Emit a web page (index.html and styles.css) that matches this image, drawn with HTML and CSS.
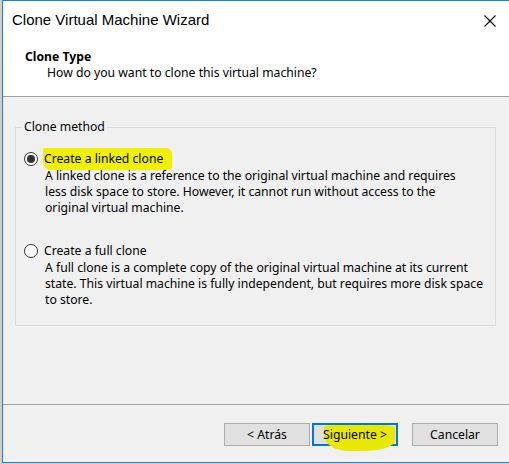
FILE: index.html
```html
<!DOCTYPE html>
<html>
<head>
<meta charset="utf-8">
<link rel="stylesheet" href="styles.css">
</head>
<body>
<div class="window">
  <div class="titlebar">
    <span class="title">Clone Virtual Machine Wizard</span>
    <svg class="close" width="12" height="12" viewBox="0 0 12 12"><path d="M0.5 0.5L11.5 11.5M11.5 0.5L0.5 11.5" stroke="#000" stroke-width="1.1" fill="none"/></svg>
  </div>
  <div class="header">
    <div class="h-title">Clone Type</div>
    <div class="h-sub">How do you want to clone this virtual machine?</div>
  </div>
  <div class="content">
    <fieldset class="group">
      <legend>Clone method</legend>
      <div class="option">
        <div class="opt-row"><span class="radio checked"></span><span class="opt-label hl">Create a linked clone</span></div>
        <div class="opt-desc">A linked clone is a reference to the original virtual machine and requires<br>less disk space to store. However, it cannot run without access to the<br>original virtual machine.</div>
      </div>
      <div class="option second">
        <div class="opt-row"><span class="radio"></span><span class="opt-label">Create a full clone</span></div>
        <div class="opt-desc">A full clone is a complete copy of the original virtual machine at its current<br>state. This virtual machine is fully independent, but requires more disk space<br>to store.</div>
      </div>
    </fieldset>
  </div>
  <div class="footer">
    <button class="btn">&lt; Atrás</button>
    <button class="btn primary"><span class="marker"></span><span class="btn-text">Siguiente &gt;</span></button>
    <button class="btn cancel">Cancelar</button>
  </div>
</div>
</body>
</html>
```
FILE: styles.css
```css
html, body {
  margin: 0;
  padding: 0;
}
body {
  width: 509px;
  height: 464px;
  overflow: hidden;
  background: #cfcfcf;
  font-family: "Noto Sans", "Liberation Sans", Arial, sans-serif;
  font-size: 12.2px;
  color: #000;
}
.window {
  margin-left: 2px;
  width: 506px;
  height: 461px;
  border: 1px solid #1883d7;
  border-right: none;
  background: #f0f0f0;
  display: flex;
  flex-direction: column;
}
.titlebar {
  height: 39px;
  flex: none;
  background: #fff;
  display: flex;
  align-items: center;
  padding: 0 13px 0 9px;
}
.title {
  font-family: "Liberation Sans", Arial, sans-serif;
  font-size: 15px;
  line-height: 20px;
  padding-bottom: 1px;
}
.close {
  margin-left: auto;
  display: block;
}
.header {
  flex: none;
  box-sizing: border-box;
  background: #fff;
  border-bottom: 1px solid #a0a0a0;
  height: 57px;
  padding: 9px 0 0 22px;
}
.h-title {
  font-weight: bold;
  line-height: 16px;
}
.h-sub {
  line-height: 16px;
  padding-left: 22px;
}
.content {
  height: 307px;
  flex: none;
  box-sizing: border-box;
  padding-top: 22px;
}
.group {
  margin: 0 13px 0 12px;
  padding: 15px 0 17px 8px;
  border: 1px solid #dcdcdc;
  min-width: 0;
}
.group legend {
  margin-left: -2px;
  padding: 0 2px;
  line-height: 16px;
}
.option.second {
  margin-top: 26px;
}
.opt-row {
  display: flex;
  align-items: center;
  height: 18px;
}
.radio {
  width: 14px;
  height: 14px;
  box-sizing: border-box;
  border: 1px solid #333;
  border-radius: 50%;
  background: #fff;
  display: flex;
  align-items: center;
  justify-content: center;
  margin-right: 5px;
  flex: none;
}
.radio.checked::after {
  content: "";
  width: 8px;
  height: 8px;
  border-radius: 50%;
  background: #333;
}
.opt-label {
  line-height: 18px;
  padding-left: 1px;
}
.opt-label.hl {
  background: #f0f000;
  padding: 2px 9px 2px 1px;
  border-radius: 2px 6px 4px 8px;
}
.opt-desc {
  padding-left: 21px;
  line-height: 16px;
}
.footer {
  flex: none;
  height: 57px;
  border-top: 1px solid #a0a0a0;
  padding: 18px 11px 0 0;
  display: flex;
  justify-content: flex-end;
  align-items: flex-start;
}
.btn {
  width: 86px;
  height: 23px;
  box-sizing: border-box;
  border: 1px solid #adadad;
  background: #e1e1e1;
  font-family: inherit;
  font-size: 12.2px;
  color: #000;
  padding: 0;
  margin: 0;
  position: relative;
}
.btn.primary {
  margin-left: 2px;
  border: 2px solid #0078d7;
}
.btn.cancel {
  margin-left: 14px;
}
.btn-text {
  position: relative;
}
.marker {
  position: absolute;
  left: 10px;
  top: 0px;
  width: 71px;
  height: 26px;
  background: #e8e800;
  border-radius: 10% 20% 45% 35% / 10% 10% 40% 60%;
}
```
